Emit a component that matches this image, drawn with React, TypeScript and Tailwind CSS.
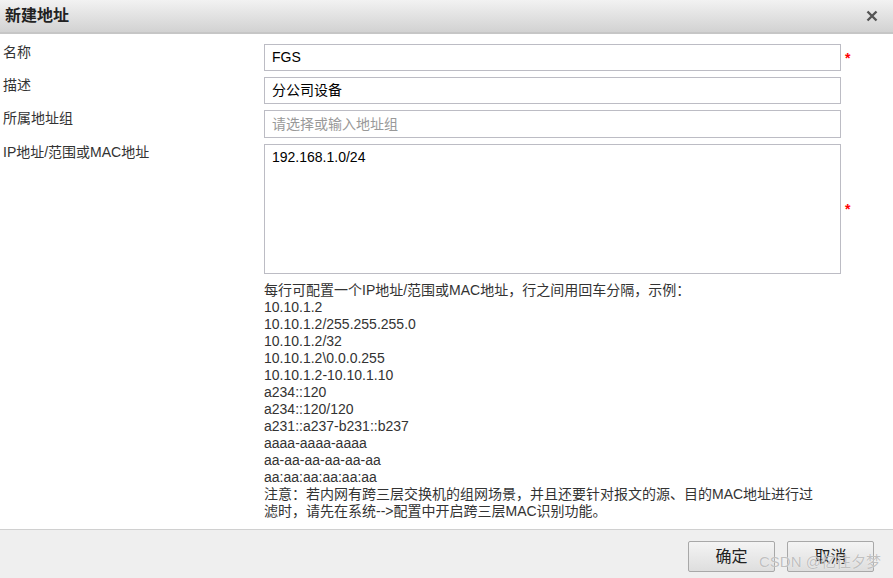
import React from 'react';

const font = { fontFamily: '"Liberation Sans", Arial, "Noto Sans CJK SC", sans-serif' };

const examples = [
  '10.10.1.2',
  '10.10.1.2/255.255.255.0',
  '10.10.1.2/32',
  '10.10.1.2\\0.0.0.255',
  '10.10.1.2-10.10.1.10',
  'a234::120',
  'a234::120/120',
  'a231::a237-b231::b237',
  'aaaa-aaaa-aaaa',
  'aa-aa-aa-aa-aa-aa',
  'aa:aa:aa:aa:aa:aa',
];

const Required = () => (
  <span className="ml-[4px] text-[14px] leading-none text-[#ff0000] font-bold">*</span>
);

export default function App() {
  return (
    <div
      className="w-[893px] h-[578px] flex flex-col bg-white text-[14px] text-[#333] relative overflow-hidden"
      style={font}
    >
      {/* Header */}
      <div className="h-[34px] flex items-center justify-between pl-[5px] pr-[15px] bg-gradient-to-b from-[#f2f2f2] to-[#d2d2d2] border-b-2 border-[#c6c6c6]">
        <span className="text-[16px] font-bold text-[#222]">新建地址</span>
        <svg width="12" height="12" viewBox="0 0 12 12">
          <path d="M1.5 1.5 L10.5 10.5 M10.5 1.5 L1.5 10.5" stroke="#555" strokeWidth="2.4" />
        </svg>
      </div>

      {/* Body */}
      <div className="flex-1 pt-[10px] flex flex-col gap-[6px]">
        <div className="flex">
          <div className="w-[264px] pl-[3px] leading-[17px]">名称</div>
          <div className="flex items-center">
            <div className="w-[577px] h-[27px] border border-[#bcbcc4] px-[7px] flex items-center text-[#000]">FGS</div>
            <Required />
          </div>
        </div>
        <div className="flex">
          <div className="w-[264px] pl-[3px] leading-[17px]">描述</div>
          <div className="w-[577px] h-[27px] border border-[#bcbcc4] px-[7px] flex items-center text-[#000]">分公司设备</div>
        </div>
        <div className="flex">
          <div className="w-[264px] pl-[3px] leading-[17px]">所属地址组</div>
          <div className="w-[577px] h-[28px] border border-[#bcbcc4] px-[7px] flex items-center text-[#999]">请选择或输入地址组</div>
        </div>
        <div className="flex">
          <div className="w-[264px] pl-[3px] leading-[17px]">IP地址/范围或MAC地址</div>
          <div className="flex flex-col">
            <div className="flex items-center">
              <div className="w-[577px] h-[130px] border border-[#bcbcc4] px-[7px] pt-[2px] text-[#000]">192.168.1.0/24</div>
              <Required />
            </div>
            <div className="mt-[8px] leading-[17px] text-[#333]">
              <div>每行可配置一个IP地址/范围或MAC地址，行之间用回车分隔，示例：</div>
              {examples.map((e) => (
                <div key={e}>{e}</div>
              ))}
              <div>注意：若内网有跨三层交换机的组网场景，并且还要针对报文的源、目的MAC地址进行过</div>
              <div>滤时，请先在系统--&gt;配置中开启跨三层MAC识别功能。</div>
            </div>
          </div>
        </div>
      </div>

      {/* Footer */}
      <div className="h-[49px] border-t border-[#d0d0d0] bg-[#efefef] flex items-start justify-end gap-[12px] pr-[19px] pt-[11px]">
        <button className="w-[87px] h-[31px] border border-[#a8a8a8] rounded-[2px] bg-gradient-to-b from-[#f4f4f4] to-[#dedede] text-[16px] text-[#222]">确定</button>
        <button className="w-[87px] h-[31px] border border-[#a8a8a8] rounded-[2px] bg-gradient-to-b from-[#f4f4f4] to-[#dedede] text-[16px] text-[#222]">取消</button>
      </div>

      {/* Watermark */}
      <div className="absolute left-[759px] top-[551px] text-[15px] text-[#b0b0b0]/80 pointer-events-none" style={{ textShadow: '0 0 1px #fff' }}>
        CSDN @忆往夕梦
      </div>
    </div>
  );
}
